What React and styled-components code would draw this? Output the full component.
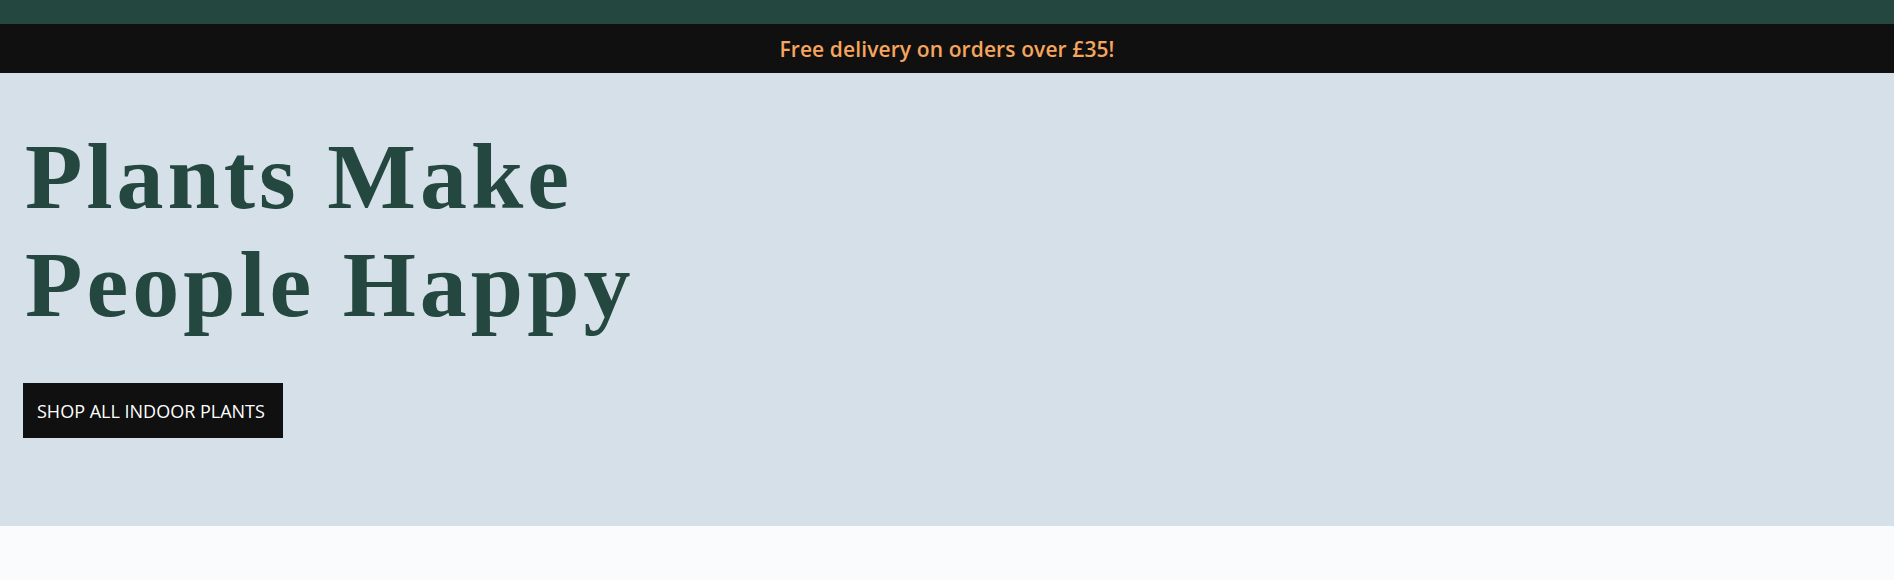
import React from 'react';
import styled, { createGlobalStyle } from 'styled-components';

const GlobalStyle = createGlobalStyle`
  * {
    box-sizing: border-box;
  }
  body {
    margin: 0;
    background: #f9fbfd;
    font-family: 'Open Sans', 'Noto Sans', sans-serif;
  }
`;

const App = () => {
  return (
    <>
      <GlobalStyle />
      <Page>
        <TopStrip />
        <PromoBar>
          <PromoText>Free delivery on orders over £35!</PromoText>
        </PromoBar>
        <Hero>
          <HeroTitle>
            Plants Make
            <br />
            People Happy
          </HeroTitle>
          <ShopButton>SHOP ALL INDOOR PLANTS</ShopButton>
        </Hero>
      </Page>
    </>
  );
};

const Page = styled.div`
  display: flex;
  flex-direction: column;
  min-height: 580px;
  background: #f9fbfd;
`;

const TopStrip = styled.div`
  height: 24px;
  background: #244740;
`;

const PromoBar = styled.div`
  height: 49px;
  background: #101010;
  display: flex;
  align-items: center;
  justify-content: center;
`;

const PromoText = styled.p`
  margin: 0;
  color: #f6a55e;
  font-size: 21px;
  font-weight: 600;
  letter-spacing: 0.1px;
`;

const Hero = styled.section`
  background: #d5e0e9;
  padding: 49px 23px 88px;
  display: flex;
  flex-direction: column;
  align-items: flex-start;
  gap: 45px;
`;

const HeroTitle = styled.h1`
  margin: 0 0 0 2px;
  font-family: 'Liberation Serif', serif;
  font-size: 94px;
  font-weight: 700;
  line-height: 108px;
  letter-spacing: 4px;
  color: #244740;
`;

const ShopButton = styled.button`
  width: 260px;
  height: 55px;
  padding: 0 14px;
  border: none;
  background: #101010;
  color: #ffffff;
  font-family: 'Open Sans', 'Noto Sans', sans-serif;
  font-size: 18px;
  text-align: left;
  white-space: nowrap;
  cursor: pointer;
`;

export default App;
